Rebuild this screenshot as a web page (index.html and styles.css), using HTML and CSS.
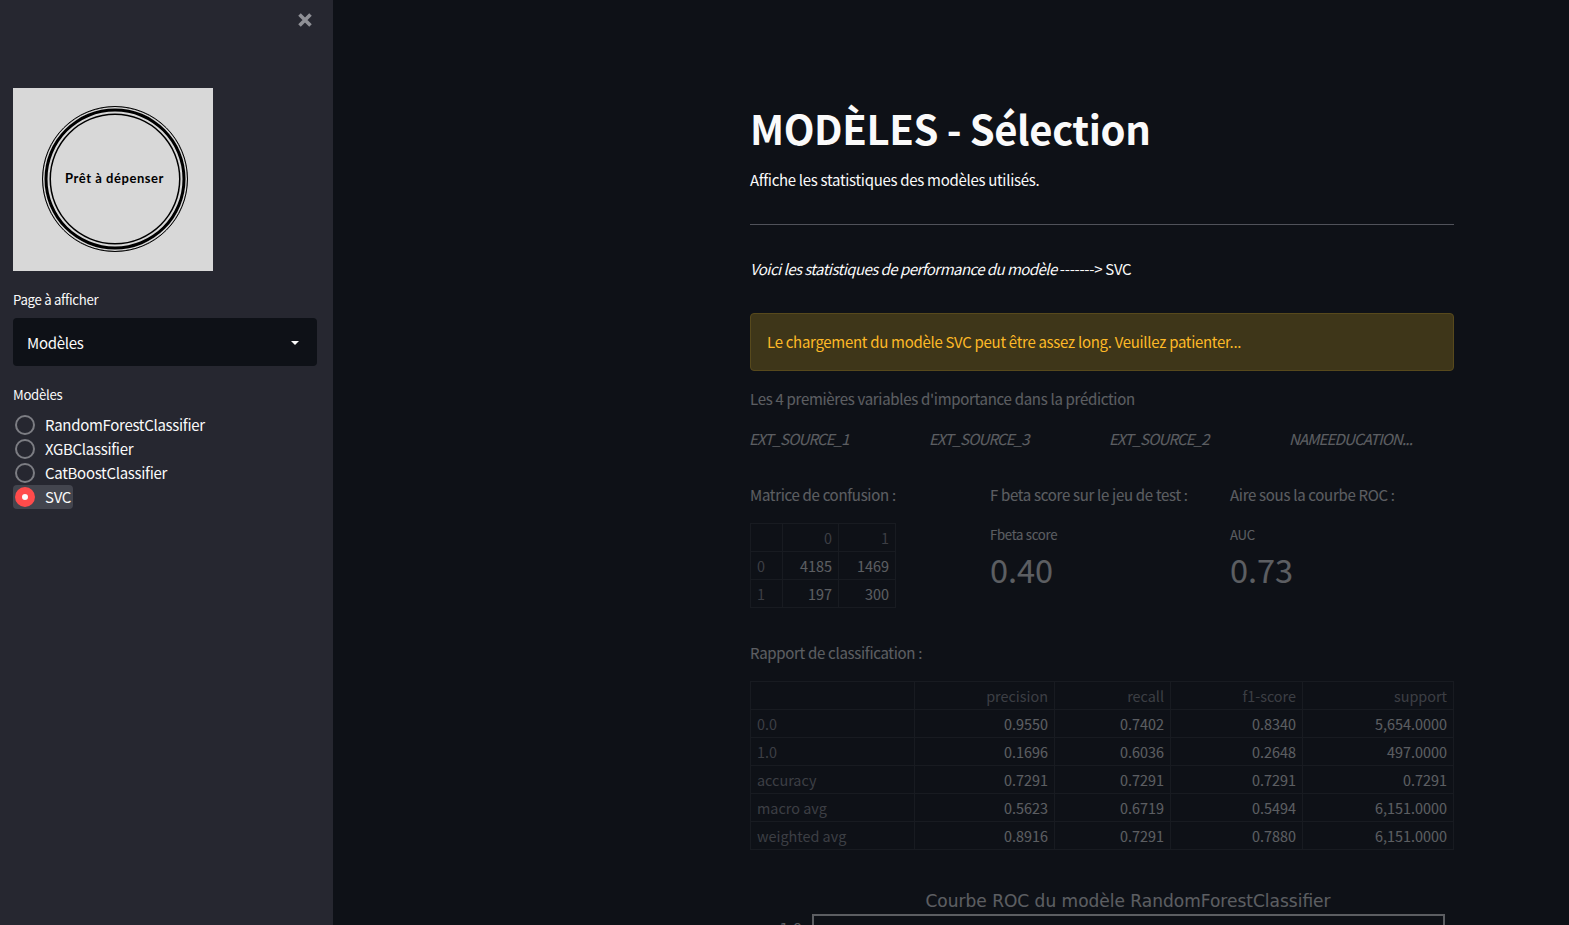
FILE: index.html
```html
<!DOCTYPE html>
<html lang="fr">

<head>
    <meta charset="UTF-8">
    <title>Modèles - Sélection</title>
    <link rel="stylesheet" href="styles.css">
</head>

<body>
    <aside class="sidebar">
        <div class="sidebar-close">
            <svg width="14" height="14" viewBox="0 0 14 14">
                <path d="M1.5 1.5 L12.5 12.5 M12.5 1.5 L1.5 12.5" stroke="#8f9096" stroke-width="3.6" fill="none"></path>
            </svg>
        </div>
        <div class="logo">
            <div class="logo-ring"><span>Prêt à dépenser</span></div>
        </div>
        <div class="field-label">Page à afficher</div>
        <div class="select">
            <span>Modèles</span>
            <span class="caret"></span>
        </div>
        <div class="field-label field-label-radio">Modèles</div>
        <div class="radio-group">
            <div class="radio"><span class="dot"></span><span>RandomForestClassifier</span></div>
            <div class="radio"><span class="dot"></span><span>XGBClassifier</span></div>
            <div class="radio"><span class="dot"></span><span>CatBoostClassifier</span></div>
            <div class="radio radio-on"><span class="dot"></span><span>SVC</span></div>
        </div>
    </aside>

    <main class="main">
        <div class="content">
            <h1>MODÈLES - Sélection</h1>
            <p class="intro">Affiche les statistiques des modèles utilisés.</p>
            <hr>
            <p class="subtitle"><em>Voici les statistiques de performance du modèle</em> -------&gt; SVC</p>
            <div class="warning">Le chargement du modèle SVC peut être assez long. Veuillez patienter...</div>

            <div class="stale">
                <p class="vars-title">Les 4 premières variables d'importance dans la prédiction</p>
                <div class="vars">
                    <em>EXT_SOURCE_1</em>
                    <em>EXT_SOURCE_3</em>
                    <em>EXT_SOURCE_2</em>
                    <em>NAMEEDUCATION...</em>
                </div>

                <div class="scores">
                    <div>
                        <p class="score-title">Matrice de confusion :</p>
                        <table class="df df-small">
                            <tr><th></th><th>0</th><th>1</th></tr>
                            <tr><th>0</th><td>4185</td><td>1469</td></tr>
                            <tr><th>1</th><td>197</td><td>300</td></tr>
                        </table>
                    </div>
                    <div>
                        <p class="score-title">F beta score sur le jeu de test :</p>
                        <div class="metric-label">Fbeta score</div>
                        <div class="metric-value">0.40</div>
                    </div>
                    <div>
                        <p class="score-title">Aire sous la courbe ROC :</p>
                        <div class="metric-label">AUC</div>
                        <div class="metric-value">0.73</div>
                    </div>
                </div>

                <p class="report-title">Rapport de classification :</p>
                <table class="df df-wide">
                    <tr><th></th><th>precision</th><th>recall</th><th>f1-score</th><th>support</th></tr>
                    <tr><th>0.0</th><td>0.9550</td><td>0.7402</td><td>0.8340</td><td>5,654.0000</td></tr>
                    <tr><th>1.0</th><td>0.1696</td><td>0.6036</td><td>0.2648</td><td>497.0000</td></tr>
                    <tr><th>accuracy</th><td>0.7291</td><td>0.7291</td><td>0.7291</td><td>0.7291</td></tr>
                    <tr><th>macro avg</th><td>0.5623</td><td>0.6719</td><td>0.5494</td><td>6,151.0000</td></tr>
                    <tr><th>weighted avg</th><td>0.8916</td><td>0.7291</td><td>0.7880</td><td>6,151.0000</td></tr>
                </table>

                <div class="chart">
                    <div class="chart-title">Courbe ROC du modèle RandomForestClassifier</div>
                    <div class="chart-row">
                        <span class="chart-tick">1.0</span>
                        <div class="chart-box"></div>
                    </div>
                </div>
            </div>
        </div>
    </main>
</body>

</html>
```

FILE: styles.css
```css
* {
    box-sizing: border-box;
}

html,
body {
    height: 100%;
}

body {
    margin: 0;
    display: flex;
    overflow: hidden;
    background-color: #0e1117;
    color: #fafafa;
    font-family: "Noto Sans CJK JP", "Noto Sans", sans-serif;
    font-size: 15px;
    letter-spacing: -0.3px;
    line-height: 24px;
}

p {
    margin: 0;
}

em {
    letter-spacing: -0.55px;
}

/* sidebar */
.sidebar {
    width: 333px;
    flex-shrink: 0;
    background-color: #262730;
    padding: 0 16px 0 13px;
}

.sidebar-close {
    display: flex;
    justify-content: flex-end;
    padding: 13px 5px 0 0;
    height: 88px;
}

.logo {
    width: 200px;
    height: 183px;
    background-color: #d8d8d8;
    display: flex;
    align-items: center;
    justify-content: center;
}

.logo-ring {
    width: 146px;
    height: 146px;
    margin: 0 0 2px 3px;
    border-radius: 50%;
    border: 1px solid #000;
    display: flex;
    align-items: center;
    justify-content: center;
    box-shadow: inset 0 0 0 1.5px #d8d8d8, inset 0 0 0 4.5px #000, inset 0 0 0 6.5px #d8d8d8, inset 0 0 0 8px #000;
}

.logo-ring span {
    margin-bottom: 2px;
    color: #000;
    font-family: Lato, sans-serif;
    font-size: 13px;
    font-weight: 700;
    letter-spacing: 0.55px;
    white-space: nowrap;
}

.field-label {
    margin-top: 17px;
    padding-top: 1px;
    font-size: 13.2px;
    line-height: 22px;
}

.select {
    margin-top: 7px;
    width: 304px;
    height: 48px;
    background-color: #0e1117;
    border-radius: 4px;
    padding: 1px 18px 0 14px;
    display: flex;
    align-items: center;
    justify-content: space-between;
}

.caret {
    width: 0;
    height: 0;
    border-left: 4px solid transparent;
    border-right: 4px solid transparent;
    border-top: 4px solid #fafafa;
}

.field-label-radio {
    margin-top: 17px;
}

.radio-group {
    margin-top: 7px;
    display: flex;
    flex-direction: column;
}

.radio {
    display: flex;
    align-items: center;
    gap: 10px;
    height: 24px;
    width: fit-content;
    padding: 0 2px;
    border-radius: 4px;
}

.radio-on {
    background-color: #43454e;
}

.dot {
    width: 20px;
    height: 20px;
    border-radius: 50%;
    border: 2px solid #7c7d83;
    background-color: #262730;
}

.radio-on .dot {
    border: 7px solid #ff4b4b;
    background-color: #fafafa;
}

/* main column */
.main {
    flex: 1;
    padding: 0 115px 0 417px;
}

.content {
    width: 704px;
}

h1 {
    margin: 0;
    padding-top: 100px;
    font-size: 40px;
    letter-spacing: -0.4px;
    line-height: 56px;
    font-weight: 700;
}

.intro {
    margin-top: 12px;
}

hr {
    margin: 32px 0 0;
    border: 0;
    border-top: 1px solid #50525a;
}

.subtitle {
    margin-top: 32px;
}

.warning {
    margin-top: 32px;
    height: 58px;
    padding-left: 16px;
    display: flex;
    align-items: center;
    background-color: #3e3619;
    border: 1px solid #57491c;
    border-radius: 4px;
    color: #fdb927;
}

/* content under this line is dimmed, the app is still running */
.stale {
    opacity: 0.33;
}

.vars-title {
    margin-top: 16px;
}

.vars {
    margin: 16px 0 0 -1px;
    display: grid;
    grid-template-columns: repeat(4, 180px);
}

.vars em {
    letter-spacing: -0.85px;
}

.scores {
    margin-top: 32px;
    display: grid;
    grid-template-columns: repeat(3, 240px);
    height: 134px;
}

.score-title {
    white-space: nowrap;
}

.df {
    border-collapse: collapse;
    font-size: 14.4px;
    letter-spacing: 0;
    line-height: 19px;
}

.df th,
.df td {
    border: 1px solid #2f3138;
    padding: 4px 6px;
    font-weight: 400;
    text-align: right;
}

.df tr th:first-child {
    text-align: left;
    color: #9a9ba0;
}

.df tr:first-child th {
    color: #9a9ba0;
}

.df-small {
    margin-top: 16px;
    width: 146px;
}

.df-small th:first-child {
    width: 32px;
}

.df-small td:nth-child(2),
.df-small th:nth-child(2) {
    width: 56px;
}

.metric-label {
    margin-top: 18px;
    font-size: 13.2px;
    line-height: 20px;
}

.metric-value {
    margin-top: 2px;
    font-size: 32.5px;
    letter-spacing: 0;
    line-height: 44px;
}

.report-title {
    margin-top: 24px;
}

.df-wide {
    margin-top: 16px;
    width: 704px;
    table-layout: fixed;
}

.df-wide th:nth-child(1) { width: 164px; }
.df-wide th:nth-child(2) { width: 140px; }
.df-wide th:nth-child(3) { width: 116px; }
.df-wide th:nth-child(4) { width: 132px; }

/* matplotlib figure */
.chart {
    margin-top: 40px;
}

.chart-title {
    text-align: center;
    font-family: "DejaVu Sans", sans-serif;
    font-size: 17px;
    letter-spacing: 0;
    line-height: 22px;
    margin-left: 52px;
}

.chart-row {
    display: flex;
    margin-top: 2px;
}

.chart-tick {
    width: 52px;
    padding-top: 2px;
    text-align: right;
    font-family: "DejaVu Sans", sans-serif;
    font-size: 14px;
    letter-spacing: 0;
}

.chart-box {
    width: 633px;
    margin-left: 10px;
    height: 100px;
    border: 2px solid #fafafa;
}
```
